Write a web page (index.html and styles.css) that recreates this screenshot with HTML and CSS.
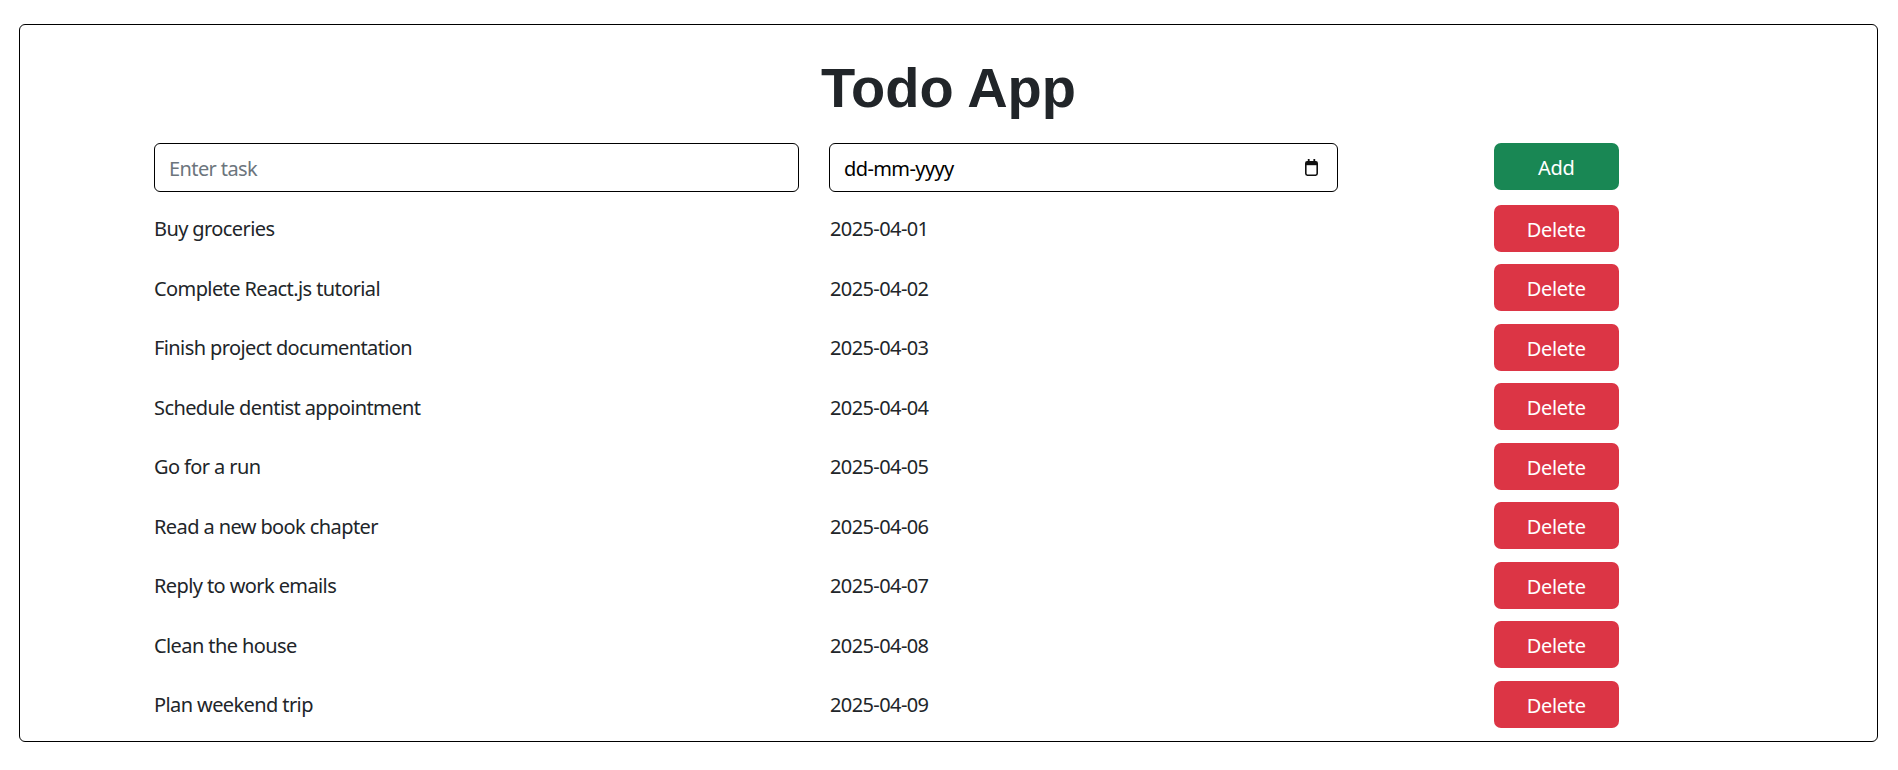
FILE: index.html
```html
<!DOCTYPE html>
<html lang="en">
<head>
<meta charset="utf-8">
<title>Todo App</title>
<link rel="stylesheet" href="styles.css">
</head>
<body>
<div class="card">
  <h1 class="title">Todo App</h1>
  <div class="list">
    <div class="row">
      <input class="field task-field" type="text" placeholder="Enter task">
      <div class="field date-field">
        <span class="date-text">dd-mm-yyyy</span>
        <svg class="cal" width="13" height="17" viewBox="0 0 13 17" aria-hidden="true">
          <rect x="2.8" y="0" width="1.8" height="3.6" fill="#111"/>
          <rect x="8.4" y="0" width="1.8" height="3.6" fill="#111"/>
          <rect x="0.8" y="2.8" width="11.4" height="13.4" rx="1.6" fill="none" stroke="#111" stroke-width="1.6"/>
          <rect x="0.8" y="2.8" width="11.4" height="3.4" fill="#111"/>
        </svg>
      </div>
      <button class="btn btn-add" type="button">Add</button>
    </div>
    <div class="row"><span class="task">Buy groceries</span><span class="date">2025-04-01</span><button class="btn btn-del" type="button">Delete</button></div>
    <div class="row"><span class="task">Complete React.js tutorial</span><span class="date">2025-04-02</span><button class="btn btn-del" type="button">Delete</button></div>
    <div class="row"><span class="task">Finish project documentation</span><span class="date">2025-04-03</span><button class="btn btn-del" type="button">Delete</button></div>
    <div class="row"><span class="task">Schedule dentist appointment</span><span class="date">2025-04-04</span><button class="btn btn-del" type="button">Delete</button></div>
    <div class="row"><span class="task">Go for a run</span><span class="date">2025-04-05</span><button class="btn btn-del" type="button">Delete</button></div>
    <div class="row"><span class="task">Read a new book chapter</span><span class="date">2025-04-06</span><button class="btn btn-del" type="button">Delete</button></div>
    <div class="row"><span class="task">Reply to work emails</span><span class="date">2025-04-07</span><button class="btn btn-del" type="button">Delete</button></div>
    <div class="row"><span class="task">Clean the house</span><span class="date">2025-04-08</span><button class="btn btn-del" type="button">Delete</button></div>
    <div class="row"><span class="task">Plan weekend trip</span><span class="date">2025-04-09</span><button class="btn btn-del" type="button">Delete</button></div>
  </div>
</div>
</body>
</html>
```
FILE: styles.css
```css
* { box-sizing: border-box; }
html, body { margin: 0; padding: 0; background: #fff; }
body {
  font-family: "Noto Sans", "Open Sans", sans-serif;
  font-size: 20px;
  letter-spacing: -0.6px;
  color: #212529;
}
.card {
  margin: 24px 20px 0 19px;
  height: 718px;
  border: 1px solid #000;
  border-radius: 6px;
  padding: 28.7px 0 0 134px;
  overflow: hidden;
}
.title {
  margin: 0 0 22.4px -134px;
  font-family: "Liberation Sans", Arial, sans-serif;
  font-weight: 700;
  font-size: 56px;
  letter-spacing: 0;
  line-height: 1.2;
  text-align: center;
  color: #212529;
}
.list {
  display: flex;
  flex-direction: column;
  gap: 12.5px;
}
.row {
  display: grid;
  grid-template-columns: 645px 509px 124.5px;
  column-gap: 30px;
  align-items: center;
}
.row > .btn { margin-left: 126px; }
.field {
  height: 49px;
  border: 1px solid #000;
  border-radius: 6px;
  font: inherit;
  letter-spacing: -0.6px;
  color: #000;
  background: #fff;
}
.task-field {
  width: 100%;
  padding: 2px 14px 0;
  outline: none;
}
.task-field::placeholder { color: #6c757d; }
.date-field {
  display: flex;
  align-items: center;
  justify-content: space-between;
  padding: 0 19px 0 14px;
}
.date-text { padding-top: 2px; }
.cal { display: block; }
.task, .date { line-height: 1.5; padding-top: 2px; }
.date { padding-left: 1px; }
.btn {
  width: 124.5px;
  height: 47px;
  border: 0;
  border-radius: 7px;
  color: #fff;
  font: inherit;
  letter-spacing: -0.3px;
  padding: 2px 0 0;
  cursor: pointer;
}
.btn-add { background: #198754; align-self: start; }
.btn-del { background: #dc3545; }
```
